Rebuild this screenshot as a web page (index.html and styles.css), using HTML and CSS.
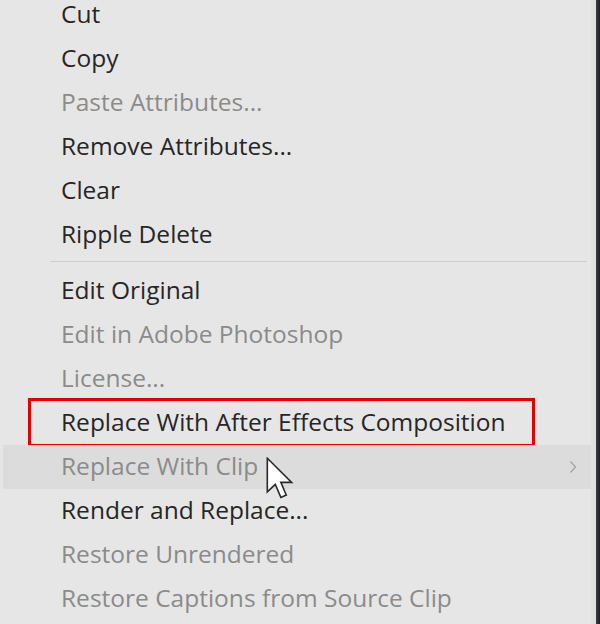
FILE: index.html
```html
<!DOCTYPE html>
<html>
<head>
<meta charset="utf-8">
<link rel="stylesheet" href="styles.css">
</head>
<body>
<div class="screen">
  <div class="menu">
    <ul class="items">
      <li class="item">Cut</li>
      <li class="item">Copy</li>
      <li class="item disabled">Paste Attributes...</li>
      <li class="item">Remove Attributes...</li>
      <li class="item">Clear</li>
      <li class="item">Ripple Delete</li>
      <li class="sep"></li>
      <li class="item">Edit Original</li>
      <li class="item disabled">Edit in Adobe Photoshop</li>
      <li class="item disabled">License...</li>
      <li class="item marked">Replace With After Effects Composition</li>
      <li class="item disabled hover">
        <span>Replace With Clip</span>
        <svg class="chev" viewBox="0 0 8 14" width="8" height="14">
          <path d="M1.5 1.5 L6.5 7 L1.5 12.5" fill="none" stroke="#a6a6a6" stroke-width="1.4"/>
        </svg>
        <svg class="cursor" viewBox="0 0 13 20" width="28" height="43">
          <path d="M0.6 0.6 L0.6 16.2 L4.3 12.7 L6.9 18.8 L9.4 17.7 L6.9 11.8 L11.9 11.8 Z" fill="#ffffff" stroke="#2a2a2a" stroke-width="0.75" stroke-linejoin="miter"/>
        </svg>
      </li>
      <li class="item">Render and Replace...</li>
      <li class="item disabled">Restore Unrendered</li>
      <li class="item disabled">Restore Captions from Source Clip</li>
    </ul>
  </div>
  <div class="edge"></div>
</div>
</body>
</html>
```
FILE: styles.css
```css
html, body {
  margin: 0;
  padding: 0;
  height: 100%;
  overflow: hidden;
  background: #e7e6e6;
}

.screen {
  display: flex;
  width: 600px;
  height: 624px;
  overflow: hidden;
}

.menu {
  flex: 1;
  background: #e7e6e6;
  border-right: 5px solid #e2e1e1;
}

.edge {
  width: 4px;
  background: linear-gradient(to right, #3a3f46, #1d2127);
}

.items {
  list-style: none;
  margin: -7px 0 0 0;
  padding: 0;
}

.item {
  position: relative;
  display: flex;
  align-items: center;
  box-sizing: border-box;
  height: 44px;
  padding-left: 61px;
  padding-bottom: 4px;
  font-family: "Open Sans", "Noto Sans", sans-serif;
  font-size: 24.5px;
  letter-spacing: 0;
  color: #262626;
  white-space: nowrap;
}

.item.disabled {
  color: #8b8b8b;
}

.sep {
  height: 1px;
  margin: 4px 4px 7px 50px;
  background: #cfcece;
}

.marked::after {
  content: "";
  position: absolute;
  left: 28px;
  top: -3px;
  width: 501px;
  height: 43px;
  border: 3px solid #e60000;
}

.hover {
  background: #dddcdc;
  margin: 0 0 0 3px;
  padding-left: 58px;
}

.chev {
  position: absolute;
  left: 566px;
  top: 15px;
}

.cursor {
  position: absolute;
  left: 263px;
  top: 12px;
}
```
